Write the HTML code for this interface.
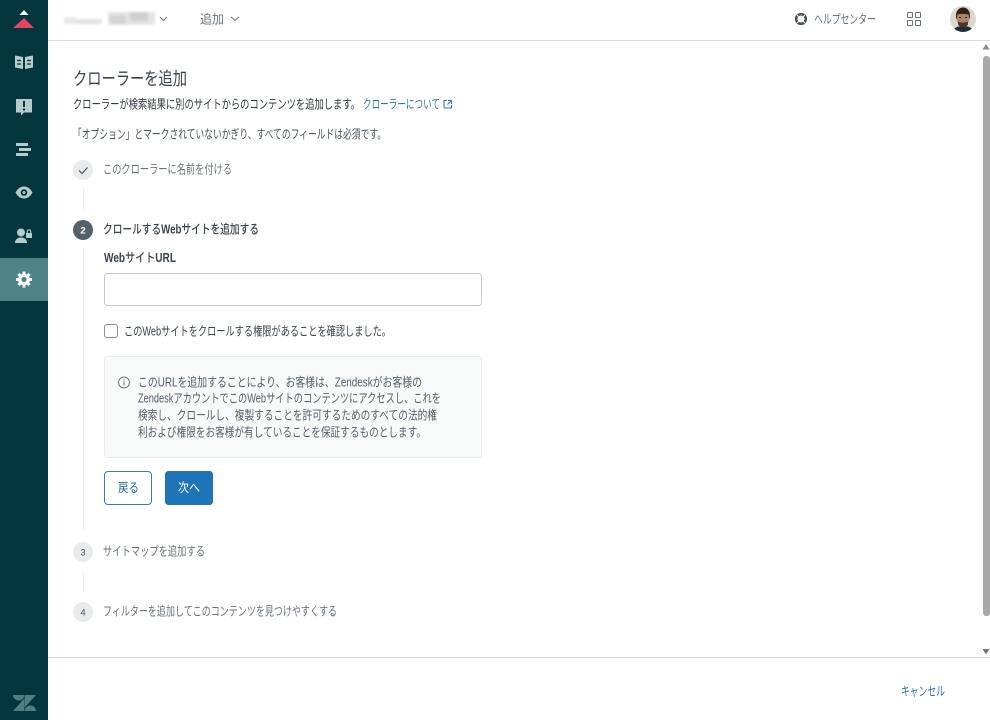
<!DOCTYPE html>
<html lang="ja">
<head>
<meta charset="utf-8">
<title>クローラーを追加</title>
<style>
html,body{margin:0;padding:0;width:990px;height:720px;overflow:hidden;background:#fff}
svg{display:block}
text{font-family:"Liberation Sans","Noto Sans CJK JP",sans-serif;font-size:12.6px;fill:#2f3941}
.g{fill:#68737d}
.b{font-weight:500}
.w{font-weight:700}
.l{fill:#1f73b7}
</style>
</head>
<body>
<svg width="990" height="720" viewBox="0 0 990 720" xmlns="http://www.w3.org/2000/svg">
<defs>
<filter id="bl" filterUnits="userSpaceOnUse" x="55" y="4" width="110" height="30"><feGaussianBlur stdDeviation="1.300"/></filter>
<clipPath id="av"><circle cx="963" cy="19" r="13"/></clipPath>
</defs>

<!-- sidebar -->
<rect x="0" y="0" width="48" height="720" fill="#03363d"/>
<rect x="0" y="258" width="48" height="43" fill="#4f8286"/>
<path d="M24 10L28.500 15H19.500Z" fill="#fff"/>
<path d="M24 18L34 28H13Z" fill="#e8445f"/>

<!-- book -->
<g fill="#b5cccd">
<path d="M15 55.500l8 1.500v12l-8-1.500Z"/>
<path d="M33 55.500l-8 1.500v12l8-1.500Z"/>
</g>
<g stroke="#03363d" stroke-width="1.200">
<path d="M17 60.500h4M17 64h4M27 60.500h4M27 64h4"/>
</g>
<!-- alert -->
<path d="M16.500 99h15a.5.5 0 0 1 .5.500v12.500a.5.5 0 0 1-.5.500h-7.500l-3 3v-3h-4.500a.5.5 0 0 1-.5-.500v-12.500a.5.5 0 0 1 .5-.500Z" fill="#b5cccd"/>
<rect x="23" y="101" width="2" height="6" fill="#03363d"/>
<rect x="23" y="108.500" width="2" height="2" fill="#03363d"/>
<!-- stack -->
<g fill="#b5cccd">
<rect x="16" y="143" width="12" height="3" rx=".5"/>
<rect x="19" y="148" width="12" height="3" rx=".5"/>
<rect x="16" y="153" width="12" height="3" rx=".5"/>
</g>
<!-- eye -->
<path d="M15.500 192.500C18 188 21 186.500 24 186.500s6 1.500 8.500 6C30 197 27 198.500 24 198.500s-6-1.500-8.500-6Z" fill="#b5cccd"/>
<circle cx="24" cy="192.500" r="3.300" fill="#03363d"/>
<circle cx="24" cy="192.500" r="1.500" fill="#b5cccd"/>
<!-- user lock -->
<circle cx="21" cy="232.500" r="4" fill="#b5cccd"/>
<path d="M15 243c0-3.500 2.500-5.500 6-5.500s6 2 6 5.500Z" fill="#b5cccd"/>
<rect x="26" y="233" width="6" height="5" rx=".5" fill="#b5cccd"/>
<path d="M27.300 233v-1.500a1.700 1.700 0 0 1 3.400 0V233" fill="none" stroke="#b5cccd" stroke-width="1.100"/>
<!-- gear -->
<g transform="translate(24 279.500)">
<circle r="5.800" fill="#fff"/>
<g stroke="#fff" stroke-width="3">
<path d="M0-8V-5M0 5V8M-8 0H-5M5 0H8M-5.600-5.600L-3.500-3.500M3.500 3.500L5.600 5.600M-5.600 5.600L-3.500 3.500M3.500-3.500L5.600-5.600"/>
</g>
<circle r="2.600" fill="#4f8286"/>
</g>
<!-- zendesk -->
<g fill="#4f7f83">
<path d="M13 695h11.300c0 3-2.500 5.500-5.600 5.500S13 698 13 695Z"/>
<path d="M24.300 698.500V711H13Z"/>
<path d="M24.700 695V707.500L36 695Z"/>
<path d="M24.700 711c0-3 2.500-5.500 5.600-5.500S36 708 36 711Z"/>
</g>

<!-- header -->
<rect x="48" y="40" width="942" height="1" fill="#d8dcde"/>
<g filter="url(#bl)">
<rect x="64" y="17" width="12" height="7" fill="#e8e8e8"/>
<rect x="76" y="19" width="26" height="5" fill="#e2e2e2"/>
<rect x="108" y="12" width="47" height="13" fill="#e4e4e4"/>
<rect x="110" y="15" width="16" height="9" fill="#d4d4d4"/>
<rect x="130" y="12" width="18" height="9" fill="#cfcfcf"/>
</g>
<path d="M160 17l3.500 3.500L167 17" fill="none" stroke="#68737d" stroke-width="1"/>
<text x="200" y="23.500" class="g" textLength="24" lengthAdjust="spacingAndGlyphs">追加</text>
<path d="M231 17l4 3.500 4-3.500" fill="none" stroke="#68737d" stroke-width="1"/>
<!-- help -->
<circle cx="801" cy="19" r="4.800" fill="none" stroke="#49545c" stroke-width="2.600"/>
<path d="M797 15l1.800 1.800M805 15l-1.800 1.800M797 23l1.800-1.800M805 23l-1.800-1.800" stroke="#fff" stroke-width=".9"/>
<text x="814" y="23.500" class="g" textLength="62" lengthAdjust="spacingAndGlyphs">ヘルプセンター</text>
<!-- grid -->
<g fill="none" stroke="#68737d" stroke-width="1">
<rect x="907.500" y="12.500" width="5" height="5" rx=".5"/>
<rect x="915.500" y="12.500" width="5" height="5" rx=".5"/>
<rect x="907.500" y="20.500" width="5" height="5" rx=".5"/>
<rect x="915.500" y="20.500" width="5" height="5" rx=".5"/>
</g>
<!-- avatar -->
<g clip-path="url(#av)">
<rect x="950" y="6" width="26" height="26" fill="#dcd8d0"/>
<path d="M952 33c1-5 5-7 11-7s10 2 11 7Z" fill="#1f2f38"/>
<ellipse cx="963" cy="18.500" rx="6" ry="8.500" fill="#b08268"/>
<path d="M956.500 20c-2-8 2-12.500 6.500-12.500s8.500 4 6.500 12.500l-1-5.500c-3-.5-7-1-11 0Z" fill="#2e211b"/>
<path d="M958 21.500c2 1.500 8 1.500 10 0v3c-2 3.500-8 3.500-10 0Z" fill="#4a352b"/>
<path d="M959 17.500h2M965 17.500h2" stroke="#2e211b" stroke-width="1"/>
</g>

<!-- scrollbar -->
<path d="M986 44l3.500 5.500h-7Z" fill="#888"/>
<rect x="983" y="56" width="7" height="560" rx="3" fill="#a9a9a9"/>
<path d="M986 654.500l3.500-5.500h-7Z" fill="#777"/>

<!-- content -->
<text x="73" y="85" style="font-size:18px;fill:#3a444c" textLength="114" lengthAdjust="spacingAndGlyphs">クローラーを追加</text>
<text x="73" y="108.500" textLength="287" lengthAdjust="spacingAndGlyphs">クローラーが検索結果に別のサイトからのコンテンツを追加します。</text>
<text x="363" y="108.500" style="fill:#2a7ba0" textLength="77" lengthAdjust="spacingAndGlyphs">クローラーについて</text>
<path d="M447 100.500h-3v7.500h7.500v-3M448 100.500h3.500V104M451.500 100.500l-4 4" fill="none" stroke="#2a7ba0" stroke-width="1"/>
<text x="73" y="138.500" style="fill:#49545c" textLength="313" lengthAdjust="spacingAndGlyphs">「オプション」とマークされていないかぎり、すべてのフィールドは必須です。</text>

<!-- step lines -->
<g fill="#e9ebed">
<rect x="83" y="189" width="1" height="20"/>
<rect x="83" y="249" width="1" height="281"/>
<rect x="83" y="572" width="1" height="20"/>
</g>

<!-- step 1 -->
<circle cx="83" cy="170" r="10" fill="#e9ebed"/>
<path d="M79 170.500l3 3 5.500-6" fill="none" stroke="#49545c" stroke-width="1.200"/>
<text x="103" y="173.500" class="g" textLength="129" lengthAdjust="spacingAndGlyphs">このクローラーに名前を付ける</text>

<!-- step 2 -->
<circle cx="83" cy="230" r="10" fill="#55616a"/>
<text x="83" y="233.500" text-anchor="middle" style="font-size:9.500px;font-weight:700;fill:#fff">2</text>
<text x="103" y="233.500" class="b" style="fill:#3a444c" textLength="156" lengthAdjust="spacingAndGlyphs">クロールする<tspan class="w">Web</tspan>サイトを追加する</text>
<text x="104" y="262" class="b" style="fill:#3a444c" textLength="72" lengthAdjust="spacingAndGlyphs"><tspan class="w">Web</tspan>サイト<tspan class="w">URL</tspan></text>
<rect x="104.500" y="273.500" width="377" height="32" rx="3" fill="#fff" stroke="#c2c8cc"/>
<rect x="104.500" y="324.500" width="13" height="13" rx="2.500" fill="#fff" stroke="#87929d"/>
<text x="124" y="335.500" style="fill:#3a444c" textLength="267" lengthAdjust="spacingAndGlyphs">このWebサイトをクロールする権限があることを確認しました。</text>

<!-- info box -->
<rect x="104.500" y="356.500" width="377" height="101" rx="3" fill="#f8f9f9" stroke="#e9ebed"/>
<circle cx="124" cy="382.500" r="5.500" fill="none" stroke="#68737d" stroke-width="1"/>
<path d="M124 381.500v4M124 379.500v1" stroke="#68737d" stroke-width="1"/>
<text x="138" y="386.500" style="fill:#55616a" textLength="284" lengthAdjust="spacingAndGlyphs">このURLを追加することにより、お客様は、Zendeskがお客様の</text>
<text x="138" y="402.500" style="fill:#55616a" textLength="303" lengthAdjust="spacingAndGlyphs">ZendeskアカウントでこのWebサイトのコンテンツにアクセスし、これを</text>
<text x="138" y="419.500" style="fill:#55616a" textLength="299" lengthAdjust="spacingAndGlyphs">検索し、クロールし、複製することを許可するためのすべての法的権</text>
<text x="138" y="436.500" style="fill:#55616a" textLength="288" lengthAdjust="spacingAndGlyphs">利および権限をお客様が有していることを保証するものとします。</text>

<!-- buttons -->
<rect x="104.500" y="471.500" width="47" height="33" rx="3.500" fill="#fff" stroke="#3b7f9c"/>
<text x="118" y="492" style="fill:#1f6f8f" textLength="21" lengthAdjust="spacingAndGlyphs">戻る</text>
<rect x="165" y="471" width="48" height="34" rx="3.500" fill="#1f73b7"/>
<text x="178" y="492" style="fill:#fff" textLength="22" lengthAdjust="spacingAndGlyphs">次へ</text>

<!-- step 3 -->
<circle cx="83" cy="552" r="10" fill="#e9ebed"/>
<text x="83" y="555.500" text-anchor="middle" style="font-size:9.500px;font-weight:500;fill:#49545c">3</text>
<text x="103" y="555.500" class="g" textLength="102" lengthAdjust="spacingAndGlyphs">サイトマップを追加する</text>

<!-- step 4 -->
<circle cx="83" cy="612" r="10" fill="#e9ebed"/>
<text x="83" y="615.500" text-anchor="middle" style="font-size:9.500px;font-weight:500;fill:#49545c">4</text>
<text x="103" y="615.500" class="g" textLength="234" lengthAdjust="spacingAndGlyphs">フィルターを追加してこのコンテンツを見つけやすくする</text>

<!-- footer -->
<rect x="48" y="657" width="942" height="1" fill="#d8dcde"/>
<text x="901" y="695.500" style="fill:#2a6fa8" textLength="44" lengthAdjust="spacingAndGlyphs">キャンセル</text>
</svg>
</body>
</html>
